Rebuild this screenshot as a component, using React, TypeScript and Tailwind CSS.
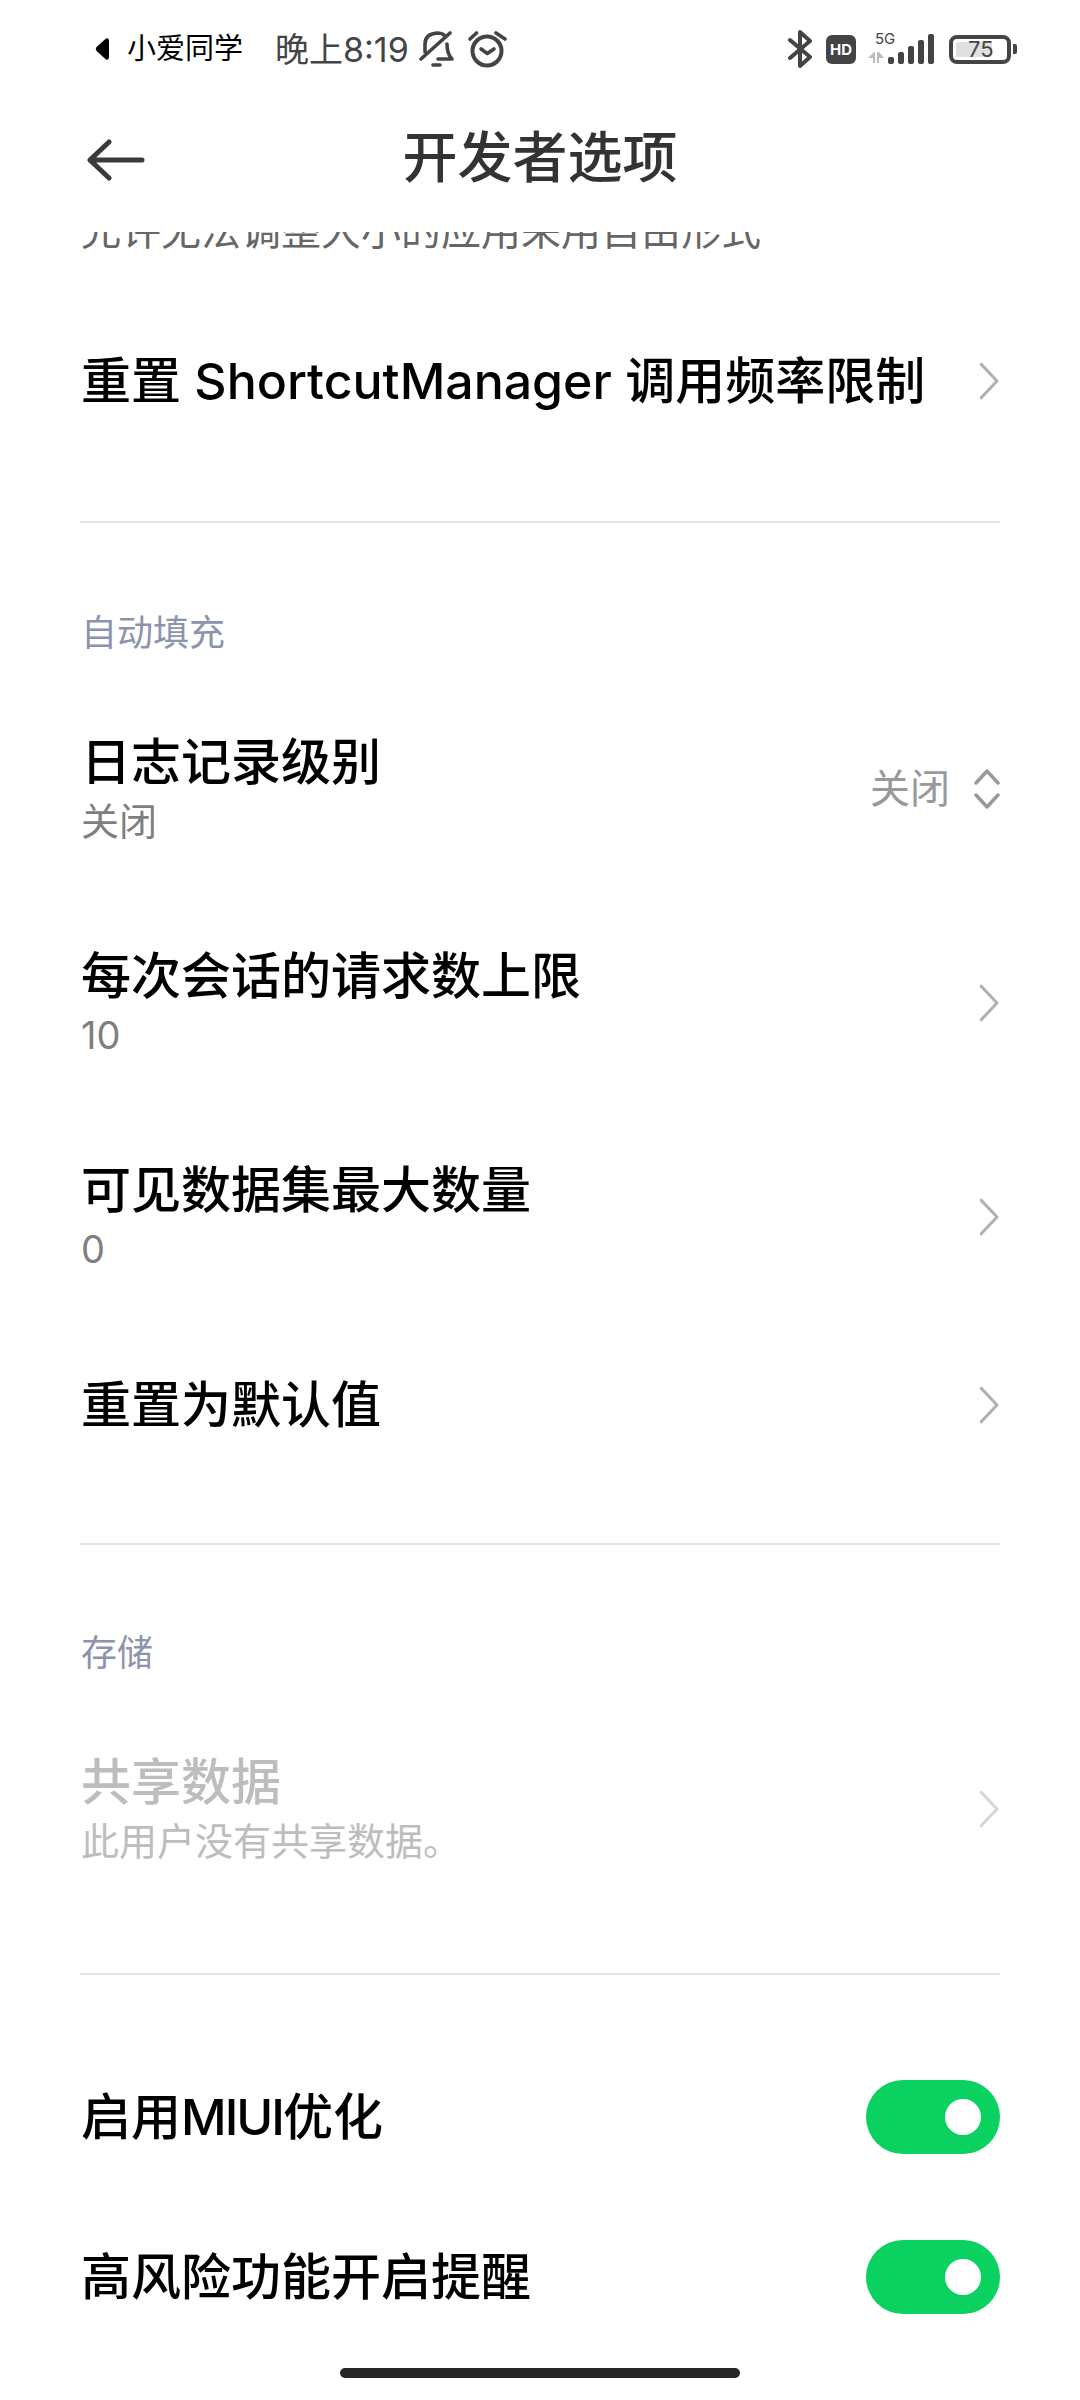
const FONT = '[font-family:Inter,"Noto_Sans_CJK_SC",sans-serif]';

function Chevron({ light }: { light?: boolean }) {
  return (
    <svg width="20" height="38" viewBox="0 0 20 38" fill="none" className="shrink-0">
      <path d="M1 2 L17 19 L1 36" stroke={light ? '#d6d6d6' : '#b0b0b0'} strokeWidth="3" strokeLinecap="round" strokeLinejoin="round" />
    </svg>
  );
}

function Toggle() {
  return (
    <div className="flex h-[74px] w-[134px] items-center justify-end rounded-full bg-[#0ad160] pr-[19px]">
      <div className="h-[36px] w-[36px] rounded-full bg-white" />
    </div>
  );
}

function Divider() {
  return <div className="mx-[80px] h-[2px] bg-[#e4e4e6]" />;
}

function SectionLabel({ text, className }: { text: string; className: string }) {
  return <div className={`px-[81px] text-[36px] leading-[44px] text-[#8c93ad] ${className}`}>{text}</div>;
}

function Row({ title, sub, height, right }: { title: React.ReactNode; sub?: string; height: string; right?: React.ReactNode }) {
  return (
    <div className={`flex items-center justify-between pl-[81px] pr-[80px] ${height}`}>
      <div>
        <div className="text-[50px] font-medium leading-[60px] text-black">{title}</div>
        {sub && <div className="mt-[4px] text-[38px] leading-[50px] text-[#7f7f7f]">{sub}</div>}
      </div>
      {right ?? <Chevron />}
    </div>
  );
}

function StatusBar() {
  return (
    <div className="flex h-[96px] items-center justify-between pl-[95px] pr-[63px] pt-[2px]">
      <div className="flex items-center">
        <svg width="14" height="24" viewBox="0 0 14 24" className="mr-[18px]">
          <path d="M11 1.5 Q14 0.5 14 4 V20 Q14 23.5 11 22.5 L1.5 14 Q0 12 1.5 10 Z" fill="#000" />
        </svg>
        <span className="text-[29px] text-black">小爱同学</span>
        <span className="ml-[32px] text-[34px] text-[#444]">晚上8:19</span>
        <svg width="36" height="38" viewBox="0 0 36 38" fill="none" stroke="#444" strokeWidth="3.6" strokeLinecap="round" strokeLinejoin="round" className="ml-[10px]">
          <path d="M6 22 V14 Q6 4 18 3 Q23 3 25 5" />
          <path d="M28 14 Q28 24 33 29 H19" />
          <path d="M2 29 L31 3" />
          <path d="M14 35 H21" />
        </svg>
        <svg width="40" height="38" viewBox="0 0 40 38" fill="none" stroke="#444" strokeLinecap="round" strokeLinejoin="round" className="ml-[13px]">
          <circle cx="19" cy="21" r="14.5" strokeWidth="4" />
          <path d="M13 19 L19.3 23.5 L26 19" strokeWidth="3.6" />
          <path d="M2 9 L8.5 3 M37 9 L28 3" strokeWidth="3.6" />
        </svg>
      </div>
      <div className="flex items-center">
        <svg width="24" height="40" viewBox="0 0 24 40" fill="none" stroke="#444" strokeWidth="4" strokeLinecap="round" strokeLinejoin="round">
          <path d="M2 11 L22 28 L12 37 V3 L22 12 L2 29" />
        </svg>
        <div className="ml-[14px] flex h-[29px] w-[30px] items-center justify-center rounded-[6px] bg-[#444] text-[15px] font-bold leading-none text-white">HD</div>
        <div className="relative ml-[12px] h-[30px] w-[66px]">
          <span className="absolute left-[7px] top-[-4px] text-[15px] leading-[18px] text-[#444]">5G</span>
          <svg width="66" height="30" viewBox="0 0 66 30" className="absolute left-0 top-0">
            <path d="M0 24 L6 18 H7 V29 H5 V24 Z M9 29 V18 H11 L16 24 H11 V29 Z" fill="#bdbdbd" />
            <rect x="20" y="23" width="6" height="7" rx="2" fill="#444" />
            <rect x="30" y="18" width="6" height="12" rx="2" fill="#444" />
            <rect x="40" y="12" width="6" height="18" rx="2" fill="#444" />
            <rect x="50" y="6" width="6" height="24" rx="2" fill="#444" />
            <rect x="60" y="0" width="6" height="30" rx="2" fill="#444" />
          </svg>
        </div>
        <div className="ml-[15px] flex h-[29px] w-[62px] items-center rounded-[8px] border-[4px] border-[#444] p-[3px]">
          <div className="relative h-full w-[36px] rounded-[2px] bg-[#e0e0e0]">
            <span className="absolute left-[12px] top-[-5px] text-[22px] leading-[25px] text-[#444]">75</span>
          </div>
        </div>
        <div className="ml-[2px] h-[10px] w-[4px] rounded-r-[2px] bg-[#444]" />
      </div>
    </div>
  );
}

export default function App() {
  return (
    <div className={`relative h-[2400px] w-[1080px] overflow-hidden bg-white ${FONT}`}>
      <StatusBar />
      <div className="relative flex h-[136px] items-center justify-center pb-[14px]">
        <svg width="58" height="42" viewBox="0 0 58 42" fill="none" stroke="#3a3a3a" strokeWidth="5" strokeLinecap="round" strokeLinejoin="round" className="absolute left-[87px] top-[43px]">
          <path d="M22 3 L3 21 L22 39 M3 21 H55" />
        </svg>
        <h1 className="text-[55px] font-medium leading-none text-[#333]">开发者选项</h1>
      </div>
      <div className="h-[2168px] overflow-hidden">
        <div className="mt-[-26px] px-[81px] text-[40px] leading-[50px] text-[#666]">允许无法调整大小的应用采用自由形式</div>
        <Row title="重置 ShortcutManager 调用频率限制" height="h-[200px] mt-[25px]" />
        <div className="h-[40px]" />
        <Divider />
        <SectionLabel text="自动填充" className="mt-[88px]" />
        <Row
          title="日志记录级别"
          sub="关闭"
          height="h-[214px] mt-[27px]"
          right={
            <div className="flex items-center">
              <span className="text-[40px] text-[#999]">关闭</span>
              <svg width="26" height="42" viewBox="0 0 26 42" fill="none" stroke="#999" strokeWidth="3.5" strokeLinecap="round" strokeLinejoin="round" className="ml-[24px]">
                <path d="M2 15 L13 3 L24 15 M2 27 L13 39 L24 27" />
              </svg>
            </div>
          }
        />
        <Row title="每次会话的请求数上限" sub="10" height="h-[214px]" />
        <Row title="可见数据集最大数量" sub="0" height="h-[214px]" />
        <Row title="重置为默认值" height="h-[162px]" />
        <div className="h-[57px]" />
        <Divider />
        <SectionLabel text="存储" className="mt-[86px]" />
        <div className="mt-[27px] flex h-[214px] items-center justify-between pl-[81px] pr-[80px]">
          <div>
            <div className="text-[50px] font-medium leading-[60px] text-[#bdbdbd]">共享数据</div>
            <div className="mt-[4px] text-[38px] leading-[50px] text-[#bdbdbd]">此用户没有共享数据。</div>
          </div>
          <Chevron light />
        </div>
        <div className="h-[57px]" />
        <Divider />
        <div className="mt-[61px] flex h-[161px] items-center justify-between pl-[81px] pr-[80px]">
          <div className="text-[50px] font-medium leading-[60px] text-black">
            启用<span className="tracking-[-2px]">MIUI</span>优化
          </div>
          <Toggle />
        </div>
        <div className="flex h-[160px] items-center justify-between pl-[81px] pr-[80px]">
          <div className="text-[50px] font-medium leading-[60px] text-black">高风险功能开启提醒</div>
          <Toggle />
        </div>
      </div>
      <div className="absolute bottom-[22px] left-[340px] h-[10px] w-[400px] rounded-full bg-[#262626]" />
    </div>
  );
}
